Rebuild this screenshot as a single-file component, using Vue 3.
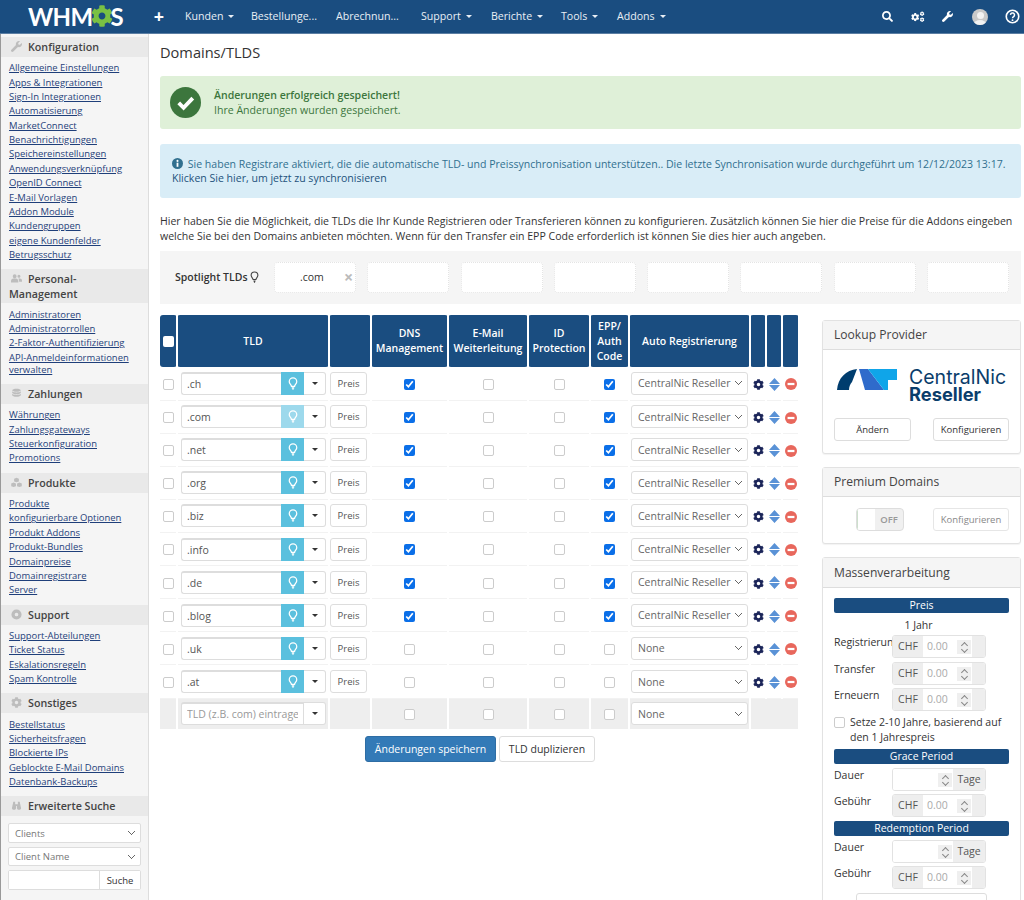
<template>
  <div class="page">
    <header class="topbar">
      <div class="logo">WHM<svg class="logo-gear" viewBox="0 0 512 512"><path fill="#7ac143" :d="cogPath" /></svg>S</div>
      <nav class="mainnav">
        <span class="plus">+</span>
        <a v-for="item in navItems" :key="item.label" :style="{ width: item.width + 'px' }">
          {{ item.label }}<i v-if="item.caret" class="caret"></i>
        </a>
      </nav>
      <div class="navicons">
        <svg class="search" viewBox="0 0 512 512"><path fill="#fff" :d="searchPath" /></svg>
        <svg class="cogs" viewBox="0 0 640 512">
          <g transform="translate(0 70) scale(.75)"><path fill="#fff" :d="cogPath" /></g>
          <g transform="translate(400 0) scale(.42)"><path fill="#fff" :d="cogPath" /></g>
          <g transform="translate(400 270) scale(.42)"><path fill="#fff" :d="cogPath" /></g>
        </svg>
        <svg viewBox="0 0 512 512"><path fill="#fff" :d="wrenchPath" /></svg>
        <span class="avatar"><i></i><b></b></span>
        <svg class="help" viewBox="0 0 24 24">
          <circle cx="12" cy="12" r="10" fill="none" stroke="#fff" stroke-width="2.6" />
          <path d="M8.8 9.4a3.2 3.2 0 1 1 5 2.7c-1.2.8-1.8 1.4-1.8 2.7" fill="none" stroke="#fff" stroke-width="2.4" />
          <circle cx="12" cy="17.8" r="1.5" fill="#fff" />
        </svg>
      </div>
    </header>

    <div class="layout">
      <aside class="sidebar">
        <section v-for="group in sideGroups" :key="group.title" class="side-group">
          <h4>
            <svg viewBox="0 0 512 512"><path fill="#bdbdbd" fill-rule="evenodd" :d="group.icon" /></svg>{{ group.title }}
          </h4>
          <a v-for="link in group.links" :key="link">{{ link }}</a>
        </section>
        <section class="side-group">
          <h4>
            <svg viewBox="0 0 24 24"><path fill="#bdbdbd" d="M5 4h4v5h6V4h4l3 14a3 3 0 0 1-3 3h-3a3 3 0 0 1-3-3v-5h-2v5a3 3 0 0 1-3 3H5a3 3 0 0 1-3-3z" /></svg>Erweiterte Suche
          </h4>
          <div class="side-search">
            <select class="chev"><option>Clients</option></select>
            <select class="chev"><option>Client Name</option></select>
            <div class="search-row"><input type="text" /><button>Suche</button></div>
          </div>
        </section>
      </aside>

      <main class="content">
        <h1>Domains/TLDS</h1>
        <div class="alert success">
          <svg viewBox="0 0 32 32">
            <circle cx="16" cy="16" r="16" fill="#3c763d" />
            <path d="M9 16.5l5 5 9.5-10" fill="none" stroke="#fff" stroke-width="4" />
          </svg>
          <div>
            <strong>Änderungen erfolgreich gespeichert!</strong><br />
            Ihre Änderungen wurden gespeichert.
          </div>
        </div>
        <div class="alert info">
          <svg viewBox="0 0 16 16">
            <circle cx="8" cy="8" r="8" fill="#31708f" />
            <circle cx="8" cy="4.2" r="1.5" fill="#fff" />
            <rect x="6.7" y="6.8" width="2.6" height="6" fill="#fff" />
          </svg>
          Sie haben Registrare aktiviert, die die automatische TLD- und Preissynchronisation unterstützen.. Die letzte Synchronisation wurde durchgeführt um 12/12/2023 13:17.
          <br /><a>Klicken Sie hier, um jetzt zu synchronisieren</a>
        </div>
        <p class="intro">
          Hier haben Sie die Möglichkeit, die TLDs die Ihr Kunde Registrieren oder Transferieren können zu konfigurieren. Zusätzlich können Sie hier die Preise für die Addons eingeben welche Sie bei den Domains anbieten möchten. Wenn für den Transfer ein EPP Code erforderlich ist können Sie dies hier auch angeben.
        </p>
        <div class="spotlight">
          <div class="spot-label">
            Spotlight TLDs
            <svg viewBox="0 0 16 20"><path :d="bulbPath" fill="none" stroke="#444" stroke-width="2" /></svg>
          </div>
          <div v-for="n in 8" :key="n" class="spot-cell">
            <template v-if="n === 1">.com<span class="spot-x">×</span></template>
          </div>
        </div>

        <div class="columns">
          <div class="table-col">
            <table class="tld-table">
              <colgroup>
                <col v-for="(w, i) in colWidths" :key="i" :style="{ width: w + 'px' }" />
              </colgroup>
              <thead>
                <tr>
                  <th><input type="checkbox" class="head-cb" /></th>
                  <th>TLD</th>
                  <th></th>
                  <th>DNS<br />Management</th>
                  <th>E-Mail<br />Weiterleitung</th>
                  <th>ID<br />Protection</th>
                  <th>EPP/<br />Auth<br />Code</th>
                  <th>Auto Registrierung</th>
                  <th></th>
                  <th></th>
                  <th></th>
                </tr>
              </thead>
              <tbody>
                <tr v-for="row in rows" :key="row.tld">
                  <td class="c"><input type="checkbox" class="cb" /></td>
                  <td>
                    <div class="tld-group">
                      <input type="text" :value="row.tld" />
                      <span class="bulb" :class="{ faded: row.tld === '.com' }">
                        <svg viewBox="0 0 16 20"><path :d="bulbPath" fill="none" stroke="#fff" stroke-width="2" /></svg>
                      </span>
                      <span class="drop"><i class="caret dark"></i></span>
                    </div>
                  </td>
                  <td class="c"><button class="btn small">Preis</button></td>
                  <td class="c"><input type="checkbox" class="cb" :checked="row.on" /></td>
                  <td class="c"><input type="checkbox" class="cb" /></td>
                  <td class="c"><input type="checkbox" class="cb" /></td>
                  <td class="c"><input type="checkbox" class="cb" :checked="row.on" /></td>
                  <td class="c">
                    <select class="reg chev"><option>{{ row.on ? 'CentralNic Reseller' : 'None' }}</option></select>
                  </td>
                  <td class="c ico"><svg viewBox="0 0 512 512"><path fill="#1b2559" :d="cogPath" /></svg></td>
                  <td class="c ico">
                    <svg class="sort" viewBox="0 0 12 14"><path fill="#5a92d6" d="M6 0l6 6.400H0zM0 7.600h12L6 14z" /></svg>
                  </td>
                  <td class="c ico">
                    <svg class="minus" viewBox="0 0 14 14"><circle cx="7" cy="7" r="7" fill="#e8675c" /><rect x="3" y="5.700" width="8" height="2.600" fill="#fff" /></svg>
                  </td>
                </tr>
                <tr class="new-row">
                  <td></td>
                  <td>
                    <div class="tld-group">
                      <input class="wide" type="text" placeholder="TLD (z.B. com) eintragen" />
                      <span class="drop"><i class="caret dark"></i></span>
                    </div>
                  </td>
                  <td></td>
                  <td class="c"><input type="checkbox" class="cb" /></td>
                  <td class="c"><input type="checkbox" class="cb" /></td>
                  <td class="c"><input type="checkbox" class="cb" /></td>
                  <td class="c"><input type="checkbox" class="cb" /></td>
                  <td class="c"><select class="reg chev"><option>None</option></select></td>
                  <td colspan="3"></td>
                </tr>
              </tbody>
            </table>
            <div class="actions">
              <button class="btn primary">Änderungen speichern</button>
              <button class="btn">TLD duplizieren</button>
            </div>
          </div>

          <div class="side-col">
            <section class="panel">
              <h3>Lookup Provider</h3>
              <div class="panel-body">
                <div class="provider-logo">
                  <svg viewBox="0 0 60 21">
                    <path fill="#003d6e" d="M0 21C1 9 9 1 20 0L15 13C13 15 12 18 12 21z" />
                    <path fill="#2f6bcb" d="M22 0h9l16 21H28z" />
                    <path fill="#0fa5e9" d="M31 0h29v11h-9v10h-4z" />
                  </svg>
                  <div class="provider-name">
                    <span>CentralNic</span>
                    <b>Reseller</b>
                  </div>
                </div>
                <div class="btn-row">
                  <button class="btn wide">Ändern</button>
                  <button class="btn">Konfigurieren</button>
                </div>
              </div>
            </section>

            <section class="panel">
              <h3>Premium Domains</h3>
              <div class="panel-body premium">
                <div class="switch"><i></i><span>OFF</span></div>
                <button class="btn muted">Konfigurieren</button>
              </div>
            </section>

            <section class="panel bulk">
              <h3>Massenverarbeitung</h3>
              <div class="panel-body">
                <div class="band">Preis</div>
                <div class="year">1 Jahr</div>
                <div v-for="label in ['Registrierung', 'Transfer', 'Erneuern']" :key="label" class="form-row">
                  <label>{{ label }}</label>
                  <div class="num-group">
                    <span class="addon">CHF</span>
                    <span class="num">0.00<i class="spin"></i></span>
                    <span class="addon end"></span>
                  </div>
                </div>
                <label class="check-line">
                  <input type="checkbox" class="cb" />
                  <span>Setze 2-10 Jahre, basierend auf den 1 Jahrespreis</span>
                </label>
                <template v-for="band in ['Grace Period', 'Redemption Period']" :key="band">
                  <div class="band">{{ band }}</div>
                  <div class="form-row">
                    <label>Dauer</label>
                    <div class="num-group">
                      <span class="num days"><i class="spin"></i></span>
                      <span class="addon tage">Tage</span>
                    </div>
                  </div>
                  <div class="form-row">
                    <label>Gebühr</label>
                    <div class="num-group">
                      <span class="addon">CHF</span>
                      <span class="num">0.00<i class="spin"></i></span>
                      <span class="addon end"></span>
                    </div>
                  </div>
                </template>
                <div class="cut-box"></div>
              </div>
            </section>
          </div>
        </div>
      </main>
    </div>
  </div>
</template>

<script setup>
const cogPath = 'M487.4 315.7l-42.6-24.6c4.3-23.2 4.3-47 0-70.2l42.6-24.6c4.9-2.8 7.1-8.6 5.5-14-11.1-35.6-30-67.8-54.7-94.6-3.8-4.1-10-5.1-14.8-2.3L380.8 110c-17.9-15.4-38.5-27.3-60.8-35.1V25.8c0-5.6-3.9-10.5-9.4-11.7-36.7-8.2-74.3-7.8-109.2 0-5.5 1.2-9.4 6.1-9.4 11.7V75c-22.2 7.9-42.8 19.8-60.8 35.1L88.7 85.5c-4.9-2.8-11-1.9-14.8 2.3-24.7 26.7-43.6 58.9-54.7 94.6-1.7 5.4.6 11.2 5.5 14L67.3 221c-4.3 23.2-4.3 47 0 70.2l-42.6 24.6c-4.9 2.8-7.1 8.6-5.5 14 11.1 35.6 30 67.8 54.7 94.6 3.8 4.1 10 5.1 14.8 2.3l42.6-24.6c17.9 15.4 38.5 27.3 60.8 35.1v49.2c0 5.6 3.9 10.5 9.4 11.7 36.7 8.2 74.3 7.8 109.2 0 5.5-1.2 9.4-6.1 9.4-11.7v-49.2c22.2-7.9 42.8-19.8 60.8-35.1l42.6 24.6c4.9 2.8 11 1.9 14.8-2.3 24.7-26.7 43.6-58.9 54.7-94.6 1.5-5.5-.7-11.3-5.6-14.1zM256 336c-44.1 0-80-35.9-80-80s35.9-80 80-80 80 35.9 80 80-35.9 80-80 80z'
const wrenchPath = 'M507.73 109.1c-2.24-9.03-13.54-12.09-20.12-5.51l-74.36 74.36-67.88-11.31-11.31-67.88 74.36-74.36c6.62-6.62 3.43-17.9-5.66-20.16-47.38-11.74-99.55.91-136.58 37.93-39.64 39.64-50.55 97.1-34.05 147.2L18.74 402.76c-24.99 24.99-24.99 65.51 0 90.5 24.99 24.99 65.51 24.99 90.5 0l213.21-213.21c50.12 16.71 107.47 5.68 147.37-34.22 37.07-37.07 49.7-89.32 37.91-136.73z'
const searchPath = 'M505 442.7L405.3 343c-4.5-4.5-10.6-7-17-7H372c27.6-35.3 44-79.7 44-128C416 93.1 322.9 0 208 0S0 93.1 0 208s93.1 208 208 208c48.3 0 92.7-16.4 128-44v16.3c0 6.4 2.5 12.5 7 17l99.7 99.7c9.4 9.4 24.6 9.4 33.9 0l28.3-28.3c9.4-9.4 9.4-24.6.1-34zM208 336c-70.7 0-128-57.2-128-128 0-70.7 57.2-128 128-128 70.7 0 128 57.2 128 128 0 70.7-57.2 128-128 128z'
const bulbPath = 'M5.5 14.5c0-2.5-3.5-4-3.5-7.5a6 6 0 0 1 12 0c0 3.500-3.500 5-3.500 7.500zM6 17h4M7 19h2'
const usersPath = 'M170 240a90 90 0 1 1 0-180 90 90 0 0 1 0 180zM0 440v-60c0-70 50-120 120-120h100c70 0 120 50 120 120v60zM370 220a70 70 0 1 0 0-140 70 70 0 0 0 0 140zM380 260h30c60 0 102 40 102 100v50H375v-50c0-40-10-70-30-95 10-3 22-5 35-5z'
const coinsPath = 'M256 30c110 0 200 30 200 70s-90 70-200 70S56 140 56 100s90-70 200-70zM56 150c30 40 110 55 200 55s170-15 200-55v70c0 40-90 70-200 70S56 260 56 220zM56 270c30 40 110 55 200 55s170-15 200-55v70c0 40-90 70-200 70S56 380 56 340z'
const cubesPath = 'M256 40l110 45v120l-110 45-110-45V85zM120 260l110 45v120l-110 45L10 425V305zM392 260l110 45v120l-110 45-110-45V305z'
const lifePath = 'M256 20a236 236 0 1 0 0 472 236 236 0 0 0 0-472zM256 170a86 86 0 1 1 0 172 86 86 0 0 1 0-172z'

const navItems = [
  { label: 'Kunden', width: 66, caret: true },
  { label: 'Bestellunge...', width: 85 },
  { label: 'Abrechnun...', width: 85 },
  { label: 'Support', width: 70, caret: true },
  { label: 'Berichte', width: 70, caret: true },
  { label: 'Tools', width: 56, caret: true },
  { label: 'Addons', width: 66, caret: true }
]

const sideGroups = [
  { title: 'Konfiguration', icon: wrenchPath, links: ['Allgemeine Einstellungen', 'Apps & Integrationen', 'Sign-In Integrationen', 'Automatisierung', 'MarketConnect', 'Benachrichtigungen', 'Speichereinstellungen', 'Anwendungsverknüpfung', 'OpenID Connect', 'E-Mail Vorlagen', 'Addon Module', 'Kundengruppen', 'eigene Kundenfelder', 'Betrugsschutz'] },
  { title: 'Personal-Management', icon: usersPath, links: ['Administratoren', 'Administratorrollen', '2-Faktor-Authentifizierung', 'API-Anmeldeinformationen verwalten'] },
  { title: 'Zahlungen', icon: coinsPath, links: ['Währungen', 'Zahlungsgateways', 'Steuerkonfiguration', 'Promotions'] },
  { title: 'Produkte', icon: cubesPath, links: ['Produkte', 'konfigurierbare Optionen', 'Produkt Addons', 'Produkt-Bundles', 'Domainpreise', 'Domainregistrare', 'Server'] },
  { title: 'Support', icon: lifePath, links: ['Support-Abteilungen', 'Ticket Status', 'Eskalationsregeln', 'Spam Kontrolle'] },
  { title: 'Sonstiges', icon: cogPath, links: ['Bestellstatus', 'Sicherheitsfragen', 'Blockierte IPs', 'Geblockte E-Mail Domains', 'Datenbank-Backups'] }
]

const colWidths = [17, 152, 42, 77, 80, 62, 39, 121, 16, 16, 17]

const rows = [
  { tld: '.ch', on: true },
  { tld: '.com', on: true },
  { tld: '.net', on: true },
  { tld: '.org', on: true },
  { tld: '.biz', on: true },
  { tld: '.info', on: true },
  { tld: '.de', on: true },
  { tld: '.blog', on: true },
  { tld: '.uk', on: false },
  { tld: '.at', on: false }
]
</script>

<style>
html, body { margin: 0; background: #fff; }
</style>

<style scoped>
.page {
  height: 900px;
  overflow: hidden;
  font-family: "Open Sans", "Liberation Sans", sans-serif;
  font-size: 11px;
  line-height: 14.4px;
  color: #333;
}
.page * { box-sizing: border-box; }

.topbar {
  height: 34px;
  background: #1a4d80;
  border-bottom: 1px solid #5b7ea3;
  display: flex;
  align-items: center;
  color: #fff;
}
.logo {
  width: 148px;
  padding-left: 28px;
  font: 700 24px/33px "Lato", "Open Sans", sans-serif;
  letter-spacing: -.6px;
  display: flex;
  align-items: center;
}
.logo-gear { width: 22px; height: 22px; margin: -2px -2px 0; }
.mainnav { display: flex; align-items: center; flex: 1; }
.plus { width: 30px; margin: 0 2px 0 -4px; text-align: center; font-size: 18px; font-weight: 700; }
.mainnav a { display: block; padding-left: 9px; font-size: 10.6px; white-space: nowrap; color: #e9eff5; }
.caret {
  display: inline-block;
  margin-left: 5px;
  vertical-align: 2px;
  border-top: 3.500px solid currentColor;
  border-left: 3.500px solid transparent;
  border-right: 3.500px solid transparent;
}
.caret.dark { color: #333; margin: 0; vertical-align: middle; }
.navicons { display: flex; align-items: center; padding-right: 4px; }
.navicons svg { width: 11px; height: 11px; margin-right: 19px; }
.navicons svg.search { margin-right: 18px; }
.navicons svg.cogs { width: 14px; height: 12px; margin-right: 17px; }
.navicons svg.help { width: 15px; height: 15px; margin: 0; }
.avatar {
  position: relative;
  width: 16px;
  height: 16px;
  margin-right: 17px;
  border-radius: 50%;
  background: #c9c9c9;
  overflow: hidden;
}
.avatar i { position: absolute; left: 4.500px; top: 3px; width: 7px; height: 7px; border-radius: 50%; background: #f2f2f2; }
.avatar b { position: absolute; left: 2px; top: 11px; width: 12px; height: 8px; border-radius: 50%; background: #f2f2f2; }

.layout { display: flex; height: 866px; }
.sidebar {
  width: 149px;
  flex: none;
  padding-top: 3px;
  background: #f5f5f5;
  border-right: 1px solid #ddd;
  border-left: 1px solid #999;
}
.side-group { margin-bottom: 7.200px; }
.side-group h4 {
  margin: 0 0 4px;
  padding: 3px 6px 1px 8px;
  min-height: 20px;
  background: #e9e9e9;
  font-size: 10.700px;
  line-height: 15px;
  font-weight: 600;
  color: #444;
}
.side-group h4 svg { width: 13px; height: 11px; margin: 0 5px 0 1px; vertical-align: -1px; }
.side-group a {
  display: block;
  padding: 1.200px 4px 1.200px 8px;
  font-size: 9.450px;
  line-height: 12px;
  color: #1f3f7a;
  text-decoration: underline;
}
.side-search { padding: 3px 7px 0; display: flex; flex-direction: column; gap: 4px; }
.chev {
  appearance: none;
  background:
    linear-gradient(45deg, transparent 40%, #666 40%, #666 60%, transparent 60%) right 8.500px center / 4px 4px no-repeat,
    linear-gradient(-45deg, transparent 40%, #666 40%, #666 60%, transparent 60%) right 5.500px center / 4px 4px no-repeat,
    #fff;
}
.side-search select {
  height: 19.500px;
  width: 133px;
  padding: 0 0 0 6px;
  border: 1px solid #ddd;
  border-radius: 2px;
  color: #777;
  font: 9.500px "Open Sans", sans-serif;
}
.search-row { display: flex; height: 19.500px; width: 133px; border: 1px solid #ddd; border-radius: 2px; background: #fff; }
.search-row input { width: 91px; border: 0; border-right: 1px solid #ddd; outline: 0; background: #fff; }
.search-row button { flex: 1; border: 0; padding: 0; background: #fff; font: 9.500px "Open Sans", sans-serif; color: #333; }

.content { flex: 1; min-width: 0; padding: 0 3px 0 11px; }
h1 { margin: 0; padding-top: 7px; height: 42px; font-size: 14.600px; line-height: 23px; font-weight: 400; color: #333; }
.alert { border-radius: 3px; font-size: 10.550px; }
.alert.success {
  height: 53px;
  margin-bottom: 15px;
  padding-left: 10px;
  display: flex;
  align-items: center;
  gap: 13px;
  background: #dff0d8;
  color: #3c763d;
}
.alert.success svg { width: 31px; height: 31px; }
.alert.success strong { font-weight: 600; }
.alert.info {
  height: 54px;
  margin-bottom: 16px;
  padding: 13px 12px;
  background: #d9edf7;
  color: #31708f;
}
.alert.info svg { width: 11px; height: 11px; vertical-align: -1px; margin: 0 2px 0 0; }
.alert.info a { color: #23527c; }
.intro { margin: 0 0 7px; font-size: 10.550px; line-height: 15px; }
.spotlight {
  height: 53px;
  display: flex;
  align-items: center;
  gap: 11.300px;
  padding-left: 15px;
  background: #f5f5f5;
  margin-bottom: 11px;
}
.spot-label { width: 87.700px; font-size: 10.500px; font-weight: 600; white-space: nowrap; }
.spot-label svg { width: 9px; height: 12px; vertical-align: -2px; }
.spot-cell {
  position: relative;
  width: 82px;
  height: 31px;
  flex: none;
  padding-left: 25px;
  background: #fff;
  border: 1px dotted #e4e4e4;
  border-radius: 4px;
  font-size: 10.500px;
  line-height: 29px;
}
.spot-x { position: absolute; right: -1px; top: 0; width: 12px; color: #bbb; font-size: 16px; font-weight: 700; }

.columns { display: flex; justify-content: space-between; }
.table-col { width: 639px; }
.side-col { width: 199px; margin-top: 5px; }
.tld-table { table-layout: fixed; width: 639px; border-collapse: collapse; }
.tld-table th {
  height: 52px;
  padding: 0;
  border-right: 2px solid #fff;
  background: #1a4d80;
  color: #fff;
  text-align: center;
  font-size: 10.500px;
  line-height: 15px;
  font-weight: 600;
  border-radius: 3px;
}
.tld-table td { height: 33.120px; padding: 0; border-bottom: 1px solid #f2f2f2; border-right: 2px solid #fff; }
.tld-table .c { text-align: center; }
.head-cb {
  appearance: none;
  width: 11px;
  height: 11px;
  margin: 0;
  vertical-align: middle;
  background: #fff;
  border-radius: 2px;
}
.cb { width: 11px; height: 11px; margin: 0; vertical-align: middle; accent-color: #0b6fe8; }
.cb:not(:checked) { appearance: none; border: 1px solid #ccc; border-radius: 2px; background: #fff; }
.tld-group { display: flex; height: 23px; margin: 0 1px 0 3px; }
.tld-group input {
  width: 100px;
  min-width: 0;
  border: 1px solid #ddd;
  border-top-width: 2px;
  border-right: 0;
  border-radius: 3px 0 0 3px;
  padding: 0 5px;
  outline: 0;
  background: #fff;
  font: 10.500px "Open Sans", sans-serif;
  color: #555;
}
.tld-group input.wide { width: 123px; border-right: 1px solid #ddd; }
.tld-group input::placeholder { color: #999; }
.bulb { width: 23px; display: flex; align-items: center; justify-content: center; background: #5bc0de; }
.bulb.faded { background: #9dd9ec; }
.bulb svg { width: 10px; height: 13px; }
.drop {
  width: 22px;
  display: flex;
  align-items: center;
  justify-content: center;
  background: #fff;
  border: 1px solid #ddd;
  border-left: 0;
  border-radius: 0 3px 3px 0;
}
.btn {
  height: 26px;
  padding: 0 8px;
  background: #fff;
  border: 1px solid #ddd;
  border-radius: 3px;
  font: 10.500px "Open Sans", sans-serif;
  color: #333;
}
.btn.small { width: 37px; height: 23px; padding: 0; margin-right: 3px; font-size: 9.500px; color: #555; }
.reg {
  width: 117px;
  height: 23px;
  padding: 0 0 0 6px;
  border: 1px solid #ddd;
  border-radius: 3px;
  color: #666;
  font: 10.500px "Open Sans", sans-serif;
}
.ico svg { width: 11px; height: 11px; display: inline-block; vertical-align: middle; }
.ico svg.sort { width: 11px; height: 13px; }
.ico svg.minus { width: 12px; height: 12px; }
.new-row td { height: 31px; background: #eee; border-bottom: 0; }
.actions { display: flex; justify-content: center; gap: 3px; margin-top: 7px; margin-left: 1px; }
.btn.primary { width: 131px; background: #337ab7; border-color: #2e6da4; color: #fff; }
.actions .btn:last-child { width: 96px; }

.panel {
  margin-bottom: 13px;
  background: #fff;
  border: 1px solid #e2e2e2;
  border-radius: 3px;
  box-shadow: 0 1px 1px rgba(0, 0, 0, .05);
}
.panel h3 {
  margin: 0;
  height: 29px;
  padding: 0 11px;
  background: #f5f5f5;
  border-bottom: 1px solid #ddd;
  font-size: 12.100px;
  line-height: 28px;
  font-weight: 400;
  color: #444;
}
.panel-body { padding: 11px 11px 12px; }
.provider-logo { display: flex; align-items: flex-start; height: 44px; margin: 5px 0 0 3px; gap: 12px; }
.provider-logo svg { width: 60px; height: 21px; flex: none; margin-top: 3px; }
.provider-name { display: flex; flex-direction: column; margin-top: 2.500px; color: #0a3d6b; white-space: nowrap; }
.provider-name span { font: 19.500px/17px "Inter", "Open Sans", sans-serif; }
.provider-name b { font: 700 18.300px/17px "Inter", "Open Sans", sans-serif; }
.btn-row { display: flex; justify-content: space-between; margin-top: 8px; }
.btn-row .btn { height: 23px; font-size: 9.500px; padding: 0; width: 76px; }
.btn-row .btn.wide { width: 77px; }
.premium { display: flex; justify-content: space-between; align-items: center; padding: 11px 11px 12px 33px; }
.switch { width: 48px; height: 23px; display: flex; border: 1px solid #ddd; border-radius: 4px; overflow: hidden; background: #f0f0f0; }
.switch i { width: 18px; background: #fff; border-left: 1px solid #cde0cd; }
.switch span { flex: 1; text-align: center; line-height: 21px; font-size: 9.500px; font-weight: 600; color: #999; }
.btn.muted { width: 76px; height: 23px; padding: 0; font-size: 9.500px; color: #888; border-color: #e6e6e6; }
.bulk h3 { height: 30px; line-height: 29px; }
.bulk .panel-body { padding: 10px 11px 0; font-size: 10.500px; }
.band { height: 15px; background: #1a4d80; border-radius: 2px; color: #fff; text-align: center; font-size: 10.500px; line-height: 15px; }
.year { text-align: center; line-height: 24px; height: 22px; padding-right: 6px; }
.form-row { display: flex; height: 23px; margin-bottom: 3.500px; line-height: 15px; }
.form-row label { width: 58px; overflow: hidden; white-space: nowrap; }
.num-group { display: flex; width: 94px; height: 23px; border: 1px solid #e2e2e2; border-radius: 3px; overflow: hidden; }
.addon { width: 30px; background: #eee; color: #555; text-align: center; line-height: 21px; }
.addon.end { width: 13px; }
.addon.tage { width: 32px; }
.num { position: relative; flex: 1; background: #fff; color: #aaa; padding-left: 4px; line-height: 21px; }
.num.days { width: 60px; flex: none; }
.spin {
  position: absolute;
  right: 1px;
  top: 4px;
  width: 14px;
  height: 14px;
  background: #efefef;
}
.spin::before,
.spin::after {
  content: "";
  position: absolute;
  left: 5px;
  width: 4px;
  height: 4px;
  border: 1px solid #888;
  transform: rotate(45deg);
}
.spin::before { top: 3px; border-right: 0; border-bottom: 0; }
.spin::after { top: 7px; border-left: 0; border-top: 0; }
.check-line { display: flex; gap: 5px; margin: 3.500px 0 4px; line-height: 15px; align-items: flex-start; }
.check-line .cb { flex: none; margin-top: 2px; }
.form-row + .band { margin-top: 1px; }
.band + .form-row { margin-top: 4px; }
.cut-box { margin: 1px 0 0 22px; width: 131px; height: 24px; border: 1px solid #ddd; border-radius: 3px; }
</style>
